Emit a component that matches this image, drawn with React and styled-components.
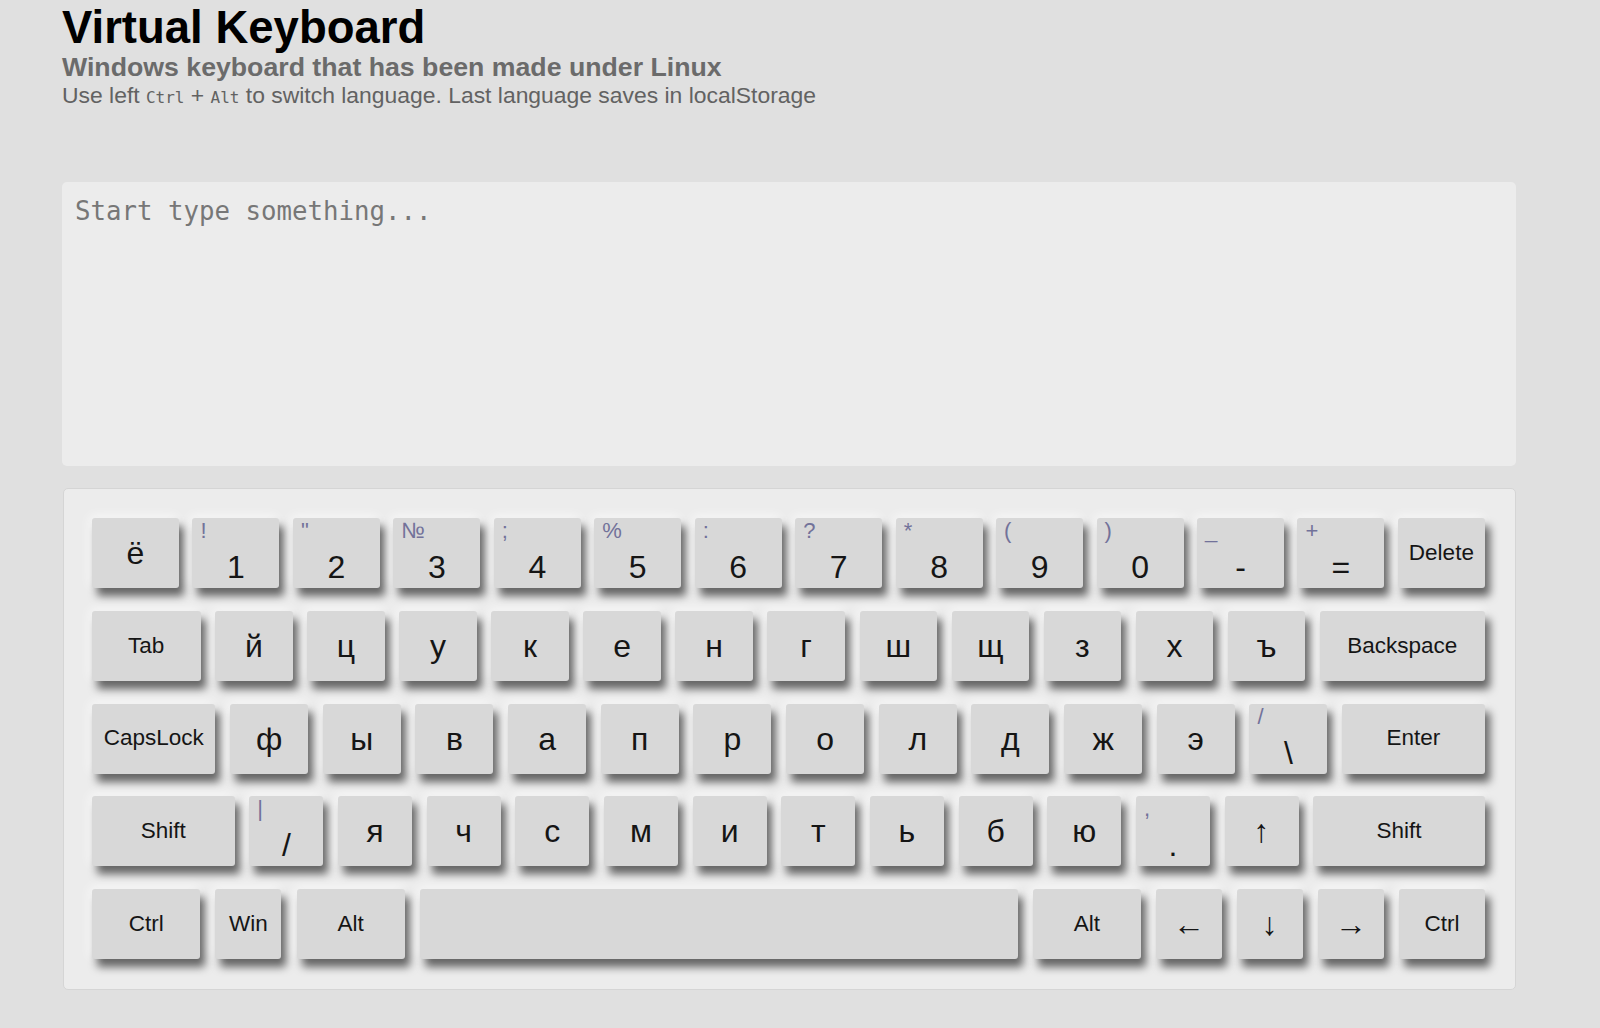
import React, {useState} from 'react'
import styled, {createGlobalStyle} from 'styled-components'

const GlobalStyle = createGlobalStyle`
  body {
    margin: 0;
    background: #e0e0e0;
    font-family: "Liberation Sans", Arial, sans-serif;
  }
`

// each row: keys with a main char (m), an optional shift char (s) or a text label, and a width in px
const rows = [
  [
    {m: 'ё', w: 87}, {m: '1', s: '!', w: 87}, {m: '2', s: '"', w: 87}, {m: '3', s: '№', w: 87},
    {m: '4', s: ';', w: 87}, {m: '5', s: '%', w: 87}, {m: '6', s: ':', w: 87}, {m: '7', s: '?', w: 87},
    {m: '8', s: '*', w: 87}, {m: '9', s: '(', w: 87}, {m: '0', s: ')', w: 87}, {m: '-', s: '_', w: 87},
    {m: '=', s: '+', w: 87}, {label: 'Delete', w: 87},
  ],
  [
    {label: 'Tab', w: 108.5},
    ...'йцукенгшщзхъ'.split('').map((m) => ({m, w: 77.5})),
    {label: 'Backspace', w: 165},
  ],
  [
    {label: 'CapsLock', w: 123.4},
    ...'фывапролджэ'.split('').map((m) => ({m, w: 78})),
    {m: '\\', s: '/', w: 78},
    {label: 'Enter', w: 142.7},
  ],
  [
    {label: 'Shift', w: 142.7},
    {m: '/', s: '|', w: 74},
    ...'ячсмитьбю'.split('').map((m) => ({m, w: 74})),
    {m: '.', s: ',', w: 74},
    {arrow: '↑', w: 74},
    {label: 'Shift', w: 171.7},
  ],
  [
    {label: 'Ctrl', w: 108.4}, {label: 'Win', w: 66}, {label: 'Alt', w: 108.4},
    {label: ' ', w: 598}, {label: 'Alt', w: 107.5}, {arrow: '←', w: 66},
    {arrow: '↓', w: 66}, {arrow: '→', w: 66}, {label: 'Ctrl', w: 86},
  ],
]

function App() {
  const [text, setText] = useState('')

  const press = (key) => {
    if (key.m) setText(text + key.m)
    else if (key.label === ' ') setText(text + ' ')
    else if (key.label === 'Backspace') setText(text.slice(0, -1))
    else if (key.label === 'Enter') setText(text + '\n')
    else if (key.label === 'Tab') setText(text + '\t')
  }

  return (
    <Page>
      <GlobalStyle />
      <Title>Virtual Keyboard</Title>
      <Subtitle>Windows keyboard that has been made under Linux</Subtitle>
      <Hint>
        Use left <Code>Ctrl</Code> + <Code>Alt</Code> to switch language. Last language saves in localStorage
      </Hint>
      <TextArea
        placeholder="Start type something..."
        value={text}
        onChange={(e) => setText(e.target.value)}
      />
      <Board>
        {rows.map((row, i) => (
          <Row key={i}>
            {row.map((key, j) => (
              <Key
                key={j}
                $w={key.w}
                $shifted={!!key.s}
                $label={!!key.label}
                onClick={() => press(key)}
              >
                {key.s && <Shift>{key.s}</Shift>}
                {key.label || key.m || key.arrow}
              </Key>
            ))}
          </Row>
        ))}
      </Board>
    </Page>
  )
}

const Page = styled.div`
  width: 1454px;
  margin-left: 62px;
  padding-top: 5px;
`

const Title = styled.h1`
  margin: 0;
  font-size: 45.5px;
  line-height: 1;
  font-weight: 700;
  color: #000;
`

const Subtitle = styled.h2`
  margin: 3.5px 0 0;
  font-size: 26.7px;
  line-height: 1;
  font-weight: 700;
  color: #6b6b6b;
`

const Hint = styled.p`
  margin: 3.5px 0 0;
  font-size: 22.9px;
  line-height: 1;
  color: #626262;
`

const Code = styled.code`
  font-family: "DejaVu Sans Mono", "Liberation Mono", monospace;
  font-size: 16px;
`

const TextArea = styled.textarea`
  display: block;
  box-sizing: border-box;
  width: 1454px;
  height: 284px;
  margin-top: 75px;
  padding: 14px 13px;
  border: none;
  border-radius: 5px;
  outline: none;
  resize: none;
  background: #ececec;
  font-family: "DejaVu Sans Mono", "Liberation Mono", monospace;
  font-size: 25.75px;
  color: #333;
  &::placeholder {
    color: #777;
  }
`

const Board = styled.div`
  box-sizing: border-box;
  width: 1453px;
  margin: 22px 0 0 1px;
  padding: 29px 30px 30px 28px;
  border: 1px solid #d5d5d5;
  border-radius: 5px;
  background: #ececec;
  display: flex;
  flex-direction: column;
  gap: 22.75px;
`

const Row = styled.div`
  display: flex;
  justify-content: space-between;
  height: 70px;
`

const Key = styled.button`
  position: relative;
  box-sizing: border-box;
  width: ${(p) => p.$w}px;
  height: 70px;
  padding: 0 0 ${(p) => (p.$shifted ? '5px' : '0')};
  border: none;
  border-radius: 3px;
  background: #d8d8d8;
  box-shadow: 5px 8px 9px rgba(0, 0, 0, 0.58), -2px -2px 12px rgba(255, 255, 255, 0.7);
  display: flex;
  align-items: ${(p) => (p.$shifted ? 'flex-end' : 'center')};
  justify-content: center;
  font-family: "Liberation Sans", Arial, sans-serif;
  font-size: ${(p) => (p.$label ? '22.5px' : '32px')};
  line-height: 1;
  color: #151515;
  cursor: pointer;
  &:active {
    background: #cfcfcf;
  }
`

const Shift = styled.span`
  position: absolute;
  top: 2px;
  left: 8px;
  font-size: 22px;
  line-height: 1;
  color: #72729a;
`

export default App
